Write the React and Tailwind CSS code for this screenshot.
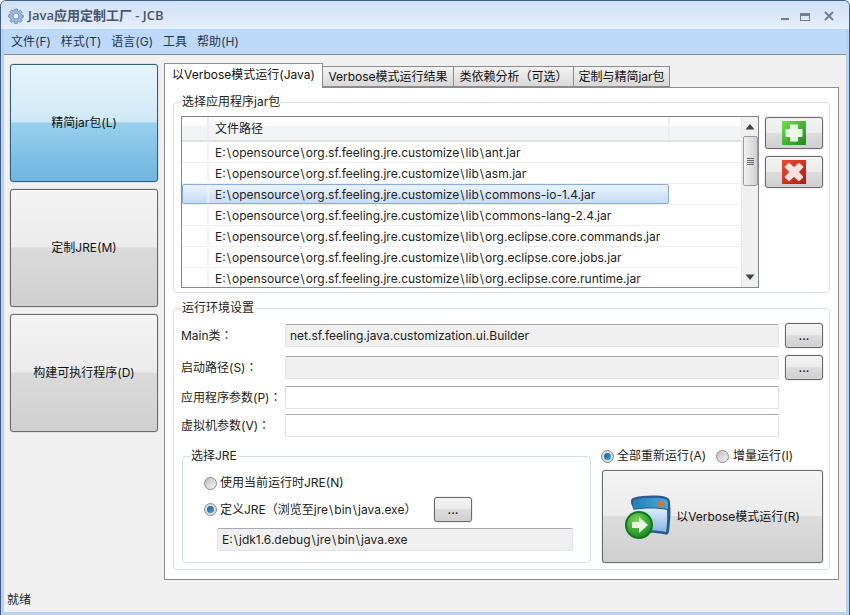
import React from 'react';

const jars = [
  'ant.jar',
  'asm.jar',
  'commons-io-1.4.jar',
  'commons-lang-2.4.jar',
  'org.eclipse.core.commands.jar',
  'org.eclipse.core.jobs.jar',
  'org.eclipse.core.runtime.jar',
];

// Backslashes run wider in the original UI font
const PathText = ({ value }) => (
  <>
    {value.split('\\').map((part, idx) => (
      <React.Fragment key={idx}>
        {idx > 0 && <span className="mx-px">\</span>}
        {part}
      </React.Fragment>
    ))}
  </>
);

// Window icon, small blue gear
const GearIcon = () => (
  <svg width="16" height="16" viewBox="0 0 16 16" className="shrink-0">
    <path
      d="M6.8 1h2.400l.3 1.800 1.300.6 1.500-1 1.700 1.700-1 1.500.6 1.300 1.800.3v2.400l-1.800.3-.6 1.300 1 1.500-1.700 1.700-1.500-1-1.300.6-.3 1.800H6.800l-.3-1.800-1.300-.6-1.500 1-1.700-1.700 1-1.500-.6-1.300L.6 9.200V6.800l1.800-.3.6-1.300-1-1.500 1.700-1.700 1.500 1 1.300-.6z"
      fill="#9db8e0"
      stroke="#5f7fb4"
      strokeWidth="0.7"
    />
    <circle cx="8" cy="8" r="3" fill="#eef4fc" stroke="#5f7fb4" strokeWidth="0.8" />
  </svg>
);

const Radio = ({ checked }) => (
  <span
    className={`flex h-[13px] w-[13px] shrink-0 items-center justify-center rounded-full border border-[#8a8a8a] ${
      checked ? 'bg-[#dcdcdc]' : 'bg-gradient-to-br from-[#c0c0c0] to-[#f4f4f4]'
    }`}
  >
    {checked && <span className="h-[7px] w-[7px] rounded-full bg-gradient-to-br from-[#0f5f8f] to-[#45a8dc]" />}
  </span>
);

// Split-gloss gray button used all over the window
const GlossButton = ({ className = '', children }) => (
  <div
    className={`flex items-center justify-center rounded-[3px] border border-[#6a6a6a] bg-[linear-gradient(#f3f3f3_0%,#ebebeb_49%,#dcdcdc_50%,#cfcfcf_100%)] text-[#111] shadow-[0_0_1px_#555] ${className}`}
  >
    {children}
  </div>
);

const Dots = () => <span className="text-[12px] font-medium leading-none text-[#222]">...</span>;

const Group = ({ title, className = '', children }) => (
  <fieldset className={`rounded-[4px] border border-[#d5dfe5] ${className}`}>
    <legend className="ml-[7px] h-4 px-px text-[12px] leading-4 text-[#222]">{title}</legend>
    {children}
  </fieldset>
);

const TextBox = ({ value, disabled, className = '' }) => (
  <div
    className={`flex h-[23px] items-center rounded-[2px] border border-[#dfe3ea] border-t-[#a8a8ae] px-1 text-[12px] text-[#222] ${
      disabled ? 'bg-[#efefef]' : 'bg-white'
    } ${className}`}
  >
    {value}
  </div>
);

const FormRow = ({ label, className = '', children }) => (
  <div className={`flex items-center ${className}`}>
    <span className="w-[104px] font-[Inter,'Noto_Sans_CJK_TC',sans-serif] text-[12px] text-[#222]">{label}</span>
    {children}
  </div>
);

const Tab = ({ active, className = '', children }) => (
  <div
    className={`flex items-center justify-center border border-[#8c8c8c] text-[12px] text-[#111] ${
      active
        ? 'relative z-10 -mb-px h-[25px] border-b-0 bg-white pb-[2px]'
        : '-ml-px h-[21px] bg-gradient-to-b from-[#f2f2f2] to-[#d8d8d8]'
    } ${className}`}
  >
    {children}
  </div>
);

const SideButton = ({ active, children }) => (
  <div
    className={`flex h-[118px] w-[148px] items-center justify-center rounded-[3px] border text-[12px] text-[#111] shadow-[0_0_1px_#555] ${
      active
        ? 'border-[#2d5f80] bg-[linear-gradient(#e6f4fb_0%,#cfe8f6_49%,#98cfee_50%,#6fb5df_100%)]'
        : 'border-[#6a6a6a] bg-[linear-gradient(#f3f3f3_0%,#ebebeb_49%,#dadada_50%,#cfcfcf_100%)]'
    }`}
  >
    {children}
  </div>
);

const JarTable = () => (
  <div className="flex h-[172px] w-[578px] overflow-hidden border border-[#828790] bg-white">
    <div className="min-w-0 flex-1">
      <div className="flex h-[25px] border-b-2 border-[#e2e2e2] bg-[linear-gradient(#ffffff_0%,#ffffff_40%,#f2f3f5_41%,#f2f3f5_100%)] text-[12px] text-[#222]">
        <div className="w-[27px] border-r-2 border-[#ececf0]" />
        <div className="flex w-[461px] items-center border-r-2 border-[#ececf0] pt-px pl-[6px]">文件路径</div>
      </div>
      {jars.map((jar, idx) => (
        <div key={jar} className="flex h-[21px] border-b border-[#eef0f3] text-[12px] text-[#222]">
          <div
            className={`flex w-[487px] items-center rounded-[2px] ${
              idx === 2
                ? 'border border-[#84acdd] bg-gradient-to-b from-[#eaf3fd] to-[#c6dcf6]'
                : 'border border-transparent'
            }`}
          >
            <span className="w-[26px] shrink-0 self-stretch border-r-2 border-[#eef3fb]" />
            <span className="whitespace-nowrap pt-px pl-[6px]">
              <PathText value={`E:\\opensource\\org.sf.feeling.jre.customize\\lib\\${jar}`} />
            </span>
          </div>
        </div>
      ))}
    </div>
    <div className="flex w-[17px] shrink-0 flex-col items-center border-l border-[#e8e8e8] bg-[#f0f0f0]">
      <svg width="10" height="6" viewBox="0 0 10 6" className="mt-[7px]">
        <path d="M5 0l4.500 5.500H.5z" fill="#444" />
      </svg>
      <div className="mt-[6px] flex h-[50px] w-[15px] flex-col items-center justify-center gap-px rounded-[2px] border border-[#9a9a9a] bg-gradient-to-r from-[#f2f2f2] to-[#cfcfcf]">
        <span className="h-px w-[7px] bg-[#666]" />
        <span className="h-px w-[7px] bg-[#666]" />
        <span className="h-px w-[7px] bg-[#666]" />
        <span className="h-px w-[7px] bg-[#666]" />
      </div>
      <svg width="10" height="6" viewBox="0 0 10 6" className="mt-auto mb-[7px]">
        <path d="M5 6L.5.500h9z" fill="#444" />
      </svg>
    </div>
  </div>
);

const PlusIcon = () => (
  <svg width="24" height="24" viewBox="0 0 24 24">
    <defs>
      <linearGradient id="plusBg" x1="0" y1="0" x2="1" y2="1">
        <stop offset="0" stopColor="#6fe04a" />
        <stop offset="1" stopColor="#1c8a1c" />
      </linearGradient>
    </defs>
    <rect width="24" height="24" fill="url(#plusBg)" />
    <path
      d="M9 3.500h6a1 1 0 0 1 1 1V8h3.500a1 1 0 0 1 1 1v6a1 1 0 0 1-1 1H16v3.500a1 1 0 0 1-1 1H9a1 1 0 0 1-1-1V16H4.500a1 1 0 0 1-1-1V9a1 1 0 0 1 1-1H8V4.500a1 1 0 0 1 1-1z"
      fill="#e9fae6"
    />
  </svg>
);

const CrossIcon = () => (
  <svg width="24" height="24" viewBox="0 0 24 24">
    <defs>
      <linearGradient id="crossBg" x1="0" y1="0" x2="1" y2="1">
        <stop offset="0" stopColor="#ee4a35" />
        <stop offset="1" stopColor="#b01c10" />
      </linearGradient>
    </defs>
    <rect width="24" height="24" fill="url(#crossBg)" />
    <path
      d="M7 3.500L12 8l5-4.500 3.500 3.500L16 12l4.500 5-3.500 3.500L12 16l-5 4.500L3.500 17 8 12 3.500 7z"
      fill="#fbe3dc"
      stroke="#fbe3dc"
      strokeWidth="1.500"
      strokeLinejoin="round"
    />
  </svg>
);

// Blue application window with the green "go" badge
const RunIcon = () => (
  <svg width="46" height="44" viewBox="0 0 46 44" className="shrink-0">
    <defs>
      <linearGradient id="winBody" x1="0" y1="0" x2="0" y2="1">
        <stop offset="0" stopColor="#dcedfb" />
        <stop offset="1" stopColor="#86b4e4" />
      </linearGradient>
      <linearGradient id="winHead" x1="0" y1="0" x2="1" y2="0">
        <stop offset="0" stopColor="#1f80b8" />
        <stop offset="1" stopColor="#4aa9d6" />
      </linearGradient>
      <radialGradient id="goBadge" cx="0.4" cy="0.3" r="0.8">
        <stop offset="0" stopColor="#7fd456" />
        <stop offset="1" stopColor="#0f8420" />
      </radialGradient>
    </defs>
    <path
      d="M8 3C18 0 34 0 41 2c3 1 4 3 4 6 1 9 0 21-1 29-.500 2-2 3-4 2.500-6-1.500-14-2-22-1.500L6 8c0-3 0-4 2-5z"
      fill="#2b5a8c"
    />
    <path d="M8 5c10-2.500 24-3 32-1 2 .5 3 2 3 4v6c-10-2-24-2-35 0z" fill="url(#winHead)" />
    <path d="M8 15c11-2 25-2 34 0 .5 8 0 15-1 22-8-2-20-2.500-33-1z" fill="url(#winBody)" />
    <circle cx="36" cy="9" r="3" fill="#ea6f1c" />
    <circle cx="14" cy="30" r="14" fill="#0e7a1c" />
    <circle cx="14" cy="30" r="12" fill="url(#goBadge)" />
    <path d="M7 27h7v-5l9 8-9 8v-5H7z" fill="#eaf7e4" />
  </svg>
);

const WindowControls = () => (
  <div className="ml-auto flex items-start">
    <span className="mt-[17px] h-[2px] w-[8px] bg-[#6c7f99]" />
    <span className="mt-[12px] ml-[11px] h-[8px] w-[10px] border border-t-[3px] border-[#6c7f99]" />
    <svg width="10" height="10" viewBox="0 0 10 10" className="mt-[10px] mr-[15px] ml-[14px]">
      <path d="M1 1l8 8M9 1L1 9" stroke="#6c7f99" strokeWidth="2" />
    </svg>
  </div>
);

const menus = ['文件(F)', '样式(T)', '语言(G)', '工具', '帮助(H)'];

export default function App() {
  return (
    <div className="flex h-[615px] w-[850px] flex-col overflow-hidden rounded-t-[6px] border border-b-0 border-[#3d5f88] bg-[#b9d1ee] px-[3px] pb-[3px] font-[Inter,'Noto_Sans_CJK_SC',sans-serif]">
      {/* Title bar */}
      <div className="-mx-[3px] flex h-[28px] shrink-0 items-start bg-gradient-to-b from-[#cfe0f5] to-[#e6eefa]">
        <div className="mt-[7px] ml-[7px]">
          <GearIcon />
        </div>
        <span className="mt-[5px] ml-[4px] font-['Open_Sans','Noto_Sans_CJK_SC',sans-serif] text-[13px] font-semibold text-[#46566b]">
          Java应用定制工厂 - JCB
        </span>
        <WindowControls />
      </div>

      {/* Menu bar */}
      <div className="flex h-[26px] shrink-0 items-center gap-[10px] border-b border-[#8c8c8c] bg-[#bcd9fa] pt-px pl-[7px] text-[12px] text-[#1e3550]">
        {menus.map((m) => (
          <span key={m}>{m}</span>
        ))}
      </div>

      {/* Body */}
      <div className="flex min-h-0 flex-1 flex-col bg-[#f0f0f0]">
        <div className="flex gap-[6px] pt-[9px] pl-[6px]">
          <div className="flex flex-col gap-[7px]">
            <SideButton active>精简jar包(L)</SideButton>
            <SideButton>定制JRE(M)</SideButton>
            <SideButton>构建可执行程序(D)</SideButton>
          </div>

          <div className="-mt-px w-[675px]">
            <div className="flex items-end">
              <Tab active className="w-[159px]">以Verbose模式运行(Java)</Tab>
              <Tab className="w-[132px]">Verbose模式运行结果</Tab>
              <Tab className="w-[121px] font-[Inter,'Noto_Sans_CJK_TC',sans-serif]">类依赖分析（可选）</Tab>
              <Tab className="w-[97px]">定制与精简jar包</Tab>
            </div>

            <div className="h-[493px] border border-[#8c8c8c] bg-white px-2 pt-[6px]">
              <Group title="选择应用程序jar包" className="h-[199px]">
                <div className="flex gap-[6px] pt-[6px] pl-[7px]">
                  <JarTable />
                  <div className="mt-px flex flex-col gap-[7px]">
                    <GlossButton className="h-[32px] w-[58px]"><PlusIcon /></GlossButton>
                    <GlossButton className="h-[32px] w-[58px]"><CrossIcon /></GlossButton>
                  </div>
                </div>
              </Group>

              <Group title="运行环境设置" className="mt-[7px] h-[270px]">
                <div className="pt-[7px] pl-[7px]">
                  <FormRow label="Main类：">
                    <TextBox disabled value="net.sf.feeling.java.customization.ui.Builder" className="w-[494px]" />
                    <GlossButton className="ml-[6px] h-[25px] w-[38px]"><Dots /></GlossButton>
                  </FormRow>
                  <FormRow label="启动路径(S)：" className="mt-[7px]">
                    <TextBox disabled className="w-[494px]" />
                    <GlossButton className="ml-[6px] h-[25px] w-[38px]"><Dots /></GlossButton>
                  </FormRow>
                  <FormRow label="应用程序参数(P)：" className="mt-[6px]">
                    <TextBox className="w-[494px]" />
                  </FormRow>
                  <FormRow label="虚拟机参数(V)：" className="mt-[5px]">
                    <TextBox className="w-[494px]" />
                  </FormRow>

                  <div className="mt-[11px] ml-px flex">
                    <Group title="选择JRE" className="h-[115px] w-[409px]">
                      <div className="pl-[21px] text-[12px] text-[#222]">
                        <label className="mt-[10px] flex items-center gap-[3px]">
                          <Radio />
                          <span>使用当前运行时JRE(N)</span>
                        </label>
                        <div className="mt-[5px] flex h-[25px] items-center gap-[3px]">
                          <Radio checked />
                          <span className="w-[211px] whitespace-nowrap font-[Inter,'Noto_Sans_CJK_TC',sans-serif]">
                            定义JRE（浏览至<PathText value="jre\bin\java.exe" />）
                          </span>
                          <GlossButton className="h-[25px] w-[38px]"><Dots /></GlossButton>
                        </div>
                        <TextBox
                          disabled
                          value={<span><PathText value="E:\jdk1.6.debug\jre\bin\java.exe" /></span>}
                          className="mt-[6px] ml-[13px] w-[356px]"
                        />
                      </div>
                    </Group>

                    <div className="ml-[11px] w-[221px]">
                      <div className="-ml-px flex h-[16px] items-center text-[12px] text-[#222]">
                        <Radio checked />
                        <span className="ml-[3px]">全部重新运行(A)</span>
                        <span className="ml-[10px]"><Radio /></span>
                        <span className="ml-[4px]">增量运行(I)</span>
                      </div>
                      <GlossButton className="mt-[6px] h-[93px] w-[221px] gap-[5px] text-[12px]">
                        <RunIcon />
                        <span>以Verbose模式运行(R)</span>
                      </GlossButton>
                    </div>
                  </div>
                </div>
              </Group>
            </div>
          </div>
        </div>

        <div className="mt-auto flex h-[24px] items-center pl-[3px] text-[12px] text-[#222]">就绪</div>
      </div>
    </div>
  );
}
